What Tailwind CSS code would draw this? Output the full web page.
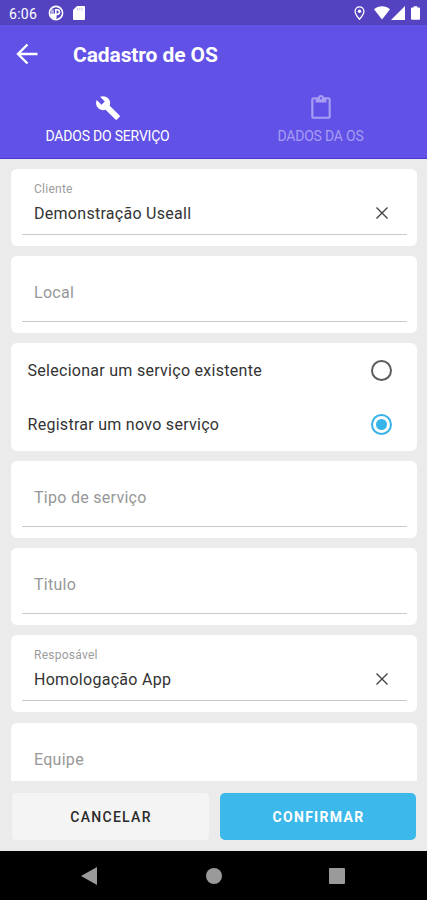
<!DOCTYPE html>
<html lang="pt-BR">
<head>
    <meta charset="UTF-8">
    <meta name="viewport" content="width=device-width, initial-scale=1.0">
    <title>Cadastro de OS</title>
    <script src="https://cdn.jsdelivr.net/npm/@tailwindcss/browser@4"></script>
</head>
<body class="bg-[#ebebeb] font-[Roboto,sans-serif]">
    <div class="w-[427px] h-[900px] flex flex-col overflow-hidden">

        <!-- Status bar -->
        <div class="h-[25px] shrink-0 bg-[#5443c0] text-white flex items-center pl-[9px] pr-[7px]">
            <span class="w-[29px] text-[14px] leading-none tracking-[0.3px] whitespace-nowrap pt-[2px]">6:06</span>
            <svg class="ml-[10px] mt-[1px] w-4 h-4" viewBox="0 0 16 16">
                <circle cx="8" cy="8" r="6.600" fill="none" stroke="#fff" stroke-width="1.600"/>
                <path d="M2 8.500h6V14A6 6 0 0 1 2 8.500z" fill="#fff"/>
                <path d="M7.800 13V4.800h1.400a2.300 2.300 0 0 1 0 4.600H7.800" fill="none" stroke="#fff" stroke-width="1.600"/>
                <path d="M3 4.500h3v4H3z" fill="#fff" fill-opacity=".55"/>
            </svg>
            <svg class="ml-[9px] mt-[1px] w-3 h-[14px]" viewBox="0 0 12 14">
                <path d="M4 0h7a1 1 0 0 1 1 1v12a1 1 0 0 1-1 1H1a1 1 0 0 1-1-1V4z" fill="#fff"/>
                <path d="M4.500 2v2.500M6.800 2v2.500M9 2v2.500" stroke="#5443c0" stroke-opacity=".4" stroke-width=".8"/>
            </svg>
            <svg class="ml-auto mt-[1px] w-[11px] h-[14px]" viewBox="0 0 11 14">
                <path d="M5.500 .8a4.400 4.400 0 0 0-4.400 4.400c0 3.200 4.400 8 4.400 8s4.400-4.800 4.400-8A4.400 4.400 0 0 0 5.500.8z" fill="none" stroke="#fff" stroke-width="1.300"/>
                <circle cx="5.500" cy="5.200" r="1.700" fill="#fff"/>
            </svg>
            <svg class="ml-[9px] mt-[1px] w-4 h-[14px]" viewBox="0 0 16 14">
                <path d="M0 3.200C4.500-.7 11.500-.7 16 3.200L8 13.500z" fill="#fff"/>
            </svg>
            <svg class="ml-[1px] mt-[1px] w-[14px] h-[14px]" viewBox="0 0 14 14">
                <path d="M14 0v14H0z" fill="#fff"/>
            </svg>
            <svg class="ml-[6px] mt-[1px] w-[9px] h-[14px]" viewBox="0 0 10 15">
                <path d="M3 0h4v1.500h2a1 1 0 0 1 1 1V14a1 1 0 0 1-1 1H1a1 1 0 0 1-1-1V2.500a1 1 0 0 1 1-1h2z" fill="#fff"/>
            </svg>
        </div>

        <!-- Toolbar and tabs -->
        <header class="h-[133.5px] shrink-0 bg-[#6151e7] border-b border-[#4b3ad2] text-white">
            <div class="h-[58px] flex items-center pl-4">
                <svg class="w-[22px] h-[22px]" viewBox="0 0 22 22" fill="none" stroke="#fff" stroke-width="2.400">
                    <path d="M21.500 11H2M11.500 1.500 2 11l9.500 9.500"/>
                </svg>
                <h1 class="ml-[35px] pt-[2px] text-[21px] leading-none font-bold tracking-[-0.1px]">Cadastro de OS</h1>
            </div>
            <nav class="grid grid-cols-2 pl-[1px]">
                <a class="flex flex-col items-center pt-[12px]">
                    <svg class="w-[26px] h-[26px]" viewBox="0 0 24 24" fill="#fff">
                        <path d="M22.700 19l-9.100-9.100c.9-2.300.4-5-1.500-6.900-2-2-5-2.400-7.400-1.300L9 6 6 9 1.600 4.700C.4 7.100.9 10.100 2.900 12.100c1.900 1.900 4.600 2.400 6.900 1.500l9.100 9.100c.4.4 1 .4 1.400 0l2.300-2.300c.5-.4.5-1.100.1-1.400z"/>
                    </svg>
                    <span class="mt-[8px] text-[14px] leading-none tracking-[-0.2px]">DADOS DO SERVIÇO</span>
                </a>
                <a class="flex flex-col items-center pt-[12px] text-[#a79df4]">
                    <svg class="w-[26px] h-[26px]" viewBox="0 0 24 24" fill="currentColor">
                        <path d="M19 2h-4.180C14.400.84 13.300 0 12 0c-1.300 0-2.400.84-2.820 2H5c-1.100 0-2 .9-2 2v16c0 1.100.9 2 2 2h14c1.100 0 2-.9 2-2V4c0-1.100-.9-2-2-2zm-7 0c.55 0 1 .45 1 1s-.45 1-1 1-1-.45-1-1 .45-1 1-1zm7 18H5V4h2v3h10V4h2v16z"/>
                    </svg>
                    <span class="mt-[8px] text-[14px] leading-none tracking-[-0.2px]">DADOS DA OS</span>
                </a>
            </nav>
        </header>

        <!-- Form -->
        <main class="h-[622.5px] shrink-0 overflow-hidden pt-[10.5px] pl-[11px] pr-[10px] flex flex-col gap-[10.2px]">
            <div class="h-[77px] shrink-0 bg-white rounded-[6px] px-[10.5px] pb-[11px]">
                <div class="h-[66px] border-b border-[#c9c9c9] pl-[12.5px] pr-[19px] flex items-end justify-between">
                    <div class="pb-[11px]">
                        <div class="text-[12px] leading-[14px] tracking-[0.25px] text-[#9c9c9c]">Cliente</div>
                        <div class="mt-[9px] text-[16px] leading-[18px] tracking-[0.28px] text-[#333]">Demonstração Useall</div>
                    </div>
                    <svg class="w-3 h-3 mb-[15.5px]" viewBox="0 0 12 12" fill="none" stroke="#444" stroke-width="1.400"><path d="M.5.5l11 11M11.500.5l-11 11"/></svg>
                </div>
            </div>

            <div class="h-[77px] shrink-0 bg-white rounded-[6px] px-[10.5px] pb-[11px]">
                <div class="h-[66px] border-b border-[#c9c9c9] pl-[12.5px] pt-[28px] text-[16px] leading-[18px] tracking-[0.28px] text-[#979797]">Local</div>
            </div>

            <div class="h-[107.400px] shrink-0 bg-white rounded-[6px] pl-[16.500px] pr-[25px] text-[16px] tracking-[0.28px] text-[#333]">
                <div class="h-[54px] flex items-center justify-between">
                    <span class="pt-[2px]">Selecionar um serviço existente</span>
                    <span class="w-[21px] h-[21px] rounded-full border-2 border-[#5c5c5c]"></span>
                </div>
                <div class="h-[54px] flex items-center justify-between">
                    <span class="pt-[2px]">Registrar um novo serviço</span>
                    <span class="w-[21px] h-[21px] rounded-full border-2 border-[#36b3e8] flex items-center justify-center">
                        <span class="w-[11px] h-[11px] rounded-full bg-[#36b3e8]"></span>
                    </span>
                </div>
            </div>

            <div class="h-[77px] shrink-0 bg-white rounded-[6px] px-[10.5px] pb-[11px]">
                <div class="h-[66px] border-b border-[#c9c9c9] pl-[12.5px] pt-[28px] text-[16px] leading-[18px] tracking-[0.28px] text-[#979797]">Tipo de serviço</div>
            </div>

            <div class="h-[77px] shrink-0 bg-white rounded-[6px] px-[10.5px] pb-[11px]">
                <div class="h-[66px] border-b border-[#c9c9c9] pl-[12.5px] pt-[28px] text-[16px] leading-[18px] tracking-[0.28px] text-[#979797]">Titulo</div>
            </div>

            <div class="h-[77px] shrink-0 bg-white rounded-[6px] px-[10.5px] pb-[11px]">
                <div class="h-[66px] border-b border-[#c9c9c9] pl-[12.5px] pr-[19px] flex items-end justify-between">
                    <div class="pb-[11px]">
                        <div class="text-[12px] leading-[14px] tracking-[0.25px] text-[#9c9c9c]">Resposável</div>
                        <div class="mt-[9px] text-[16px] leading-[18px] tracking-[0.28px] text-[#333]">Homologação App</div>
                    </div>
                    <svg class="w-3 h-3 mb-[15.5px]" viewBox="0 0 12 12" fill="none" stroke="#444" stroke-width="1.400"><path d="M.5.5l11 11M11.500.5l-11 11"/></svg>
                </div>
            </div>

            <div class="h-[77px] shrink-0 bg-white rounded-[6px] px-[10.5px] pb-[11px]">
                <div class="h-[66px] border-b border-[#c9c9c9] pl-[12.5px] pt-[28px] text-[16px] leading-[18px] tracking-[0.28px] text-[#979797]">Equipe</div>
            </div>
        </main>

        <!-- Actions -->
        <div class="h-[70px] shrink-0 pt-[12px] pl-3 pr-[11px] flex gap-[11px] text-[14px] font-medium tracking-[1.3px]">
            <button class="w-[197px] h-[47px] pt-[2px] pl-[1px] rounded-[4px] bg-[#f4f4f4] text-[#2b2b2b]">CANCELAR</button>
            <button class="w-[196px] h-[47px] pt-[2px] pl-[1px] rounded-[5px] bg-[#3cb8ea] text-white font-bold">CONFIRMAR</button>
        </div>

        <!-- Android navigation -->
        <div class="h-[49px] shrink-0 bg-black flex items-center pl-[81px]">
            <svg class="w-4 h-[18px]" viewBox="0 0 16 18"><path d="M16 0v18L0 9z" fill="#9a9a9a"/></svg>
            <span class="ml-[109px] w-4 h-4 rounded-full bg-[#9a9a9a]"></span>
            <span class="ml-[107px] w-4 h-4 rounded-[1px] bg-[#9a9a9a]"></span>
        </div>
    </div>
</body>
</html>
